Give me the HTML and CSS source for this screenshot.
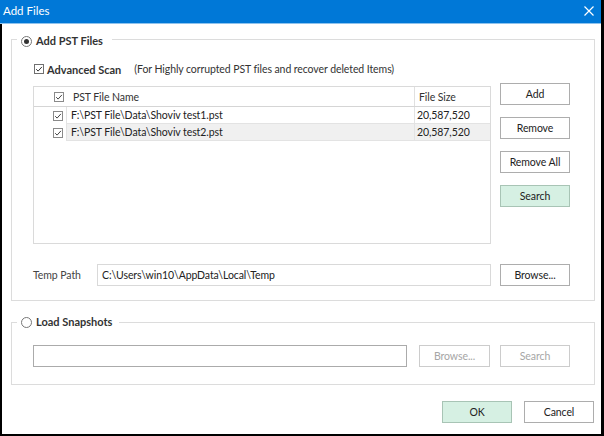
FILE: index.html
```html
<!DOCTYPE html>
<html>
<head>
<meta charset="utf-8">
<title>Add Files</title>
<link rel="stylesheet" href="styles.css">
</head>
<body>
<div class="window">
  <div class="titlebar">
    <span class="title">Add Files</span>
    <svg class="close" width="10" height="10" viewBox="0 0 10 10"><path d="M0.5 0.5L9.5 9.5M9.5 0.5L0.5 9.5" stroke="#fff" stroke-width="1.2" fill="none"/></svg>
  </div>
  <div class="body">
    <section class="group g1">
      <div class="legend">
        <span class="radio checked"></span><span class="legend-text">Add PST Files</span>
      </div>
      <div class="scan-row">
        <svg class="cb" width="10" height="10" viewBox="0 0 10 10"><rect x="0.5" y="0.5" width="9" height="9" fill="#fff" stroke="#707070"/><path d="M2.2 5.2L4.1 7.1L7.9 2.9" stroke="#333" stroke-width="1" fill="none"/></svg>
        <span class="scan-label">Advanced Scan</span>
        <span class="hint">(For Highly corrupted PST files and recover deleted Items)</span>
      </div>
      <div class="list-area">
        <div class="list">
          <div class="lhead">
            <div class="h-name">
              <svg class="cb" width="10" height="10" viewBox="0 0 10 10"><rect x="0.5" y="0.5" width="9" height="9" fill="#fff" stroke="#8a8a8a"/><path d="M2.2 5.2L4.1 7.1L7.9 2.9" stroke="#444" stroke-width="1" fill="none"/></svg>
              <span class="h-text">PST File Name</span>
            </div>
            <div class="h-size">File Size</div>
          </div>
          <div class="lrow">
            <div class="c-cb"><svg class="cb" width="10" height="10" viewBox="0 0 10 10"><rect x="0.5" y="0.5" width="9" height="9" fill="#fff" stroke="#8a8a8a"/><path d="M2.2 5.2L4.1 7.1L7.9 2.9" stroke="#444" stroke-width="1" fill="none"/></svg></div>
            <div class="c-name">F:\PST File\Data\Shoviv test1.pst</div>
            <div class="c-size">20,587,520</div>
          </div>
          <div class="lrow alt">
            <div class="c-cb"><svg class="cb" width="10" height="10" viewBox="0 0 10 10"><rect x="0.5" y="0.5" width="9" height="9" fill="#fff" stroke="#8a8a8a"/><path d="M2.2 5.2L4.1 7.1L7.9 2.9" stroke="#444" stroke-width="1" fill="none"/></svg></div>
            <div class="c-name">F:\PST File\Data\Shoviv test2.pst</div>
            <div class="c-size">20,587,520</div>
          </div>
        </div>
        <div class="btn-col">
          <button class="btn">Add</button>
          <button class="btn">Remove</button>
          <button class="btn">Remove All</button>
          <button class="btn green">Search</button>
        </div>
      </div>
      <div class="temp-row">
        <span class="temp-label">Temp Path</span>
        <div class="input temp-input">C:\Users\win10\AppData\Local\Temp</div>
        <button class="btn">Browse...</button>
      </div>
    </section>
    <section class="group g2">
      <div class="legend">
        <span class="radio"></span><span class="legend-text">Load Snapshots</span>
      </div>
      <div class="snap-row">
        <div class="input snap-input"></div>
        <button class="btn disabled snap-browse">Browse...</button>
        <button class="btn disabled">Search</button>
      </div>
    </section>
    <div class="footer">
      <button class="btn green">OK</button>
      <button class="btn">Cancel</button>
    </div>
  </div>
</div>
</body>
</html>
```

FILE: styles.css
```css
* { box-sizing: border-box; }
html, body { margin: 0; padding: 0; background: #fff; }
body {
  font-family: Lato, "Open Sans", sans-serif;
  font-size: 10.5px;
  letter-spacing: -0.08px;
  color: #222;
}
.window {
  width: 604px;
  height: 436px;
  border-right: 3px solid #000;
  display: flex;
  flex-direction: column;
  background: #fff;
}
.titlebar {
  height: 24px;
  flex: 0 0 24px;
  background: #0078d7;
  border-bottom: 1px solid #8ec3ee;
  display: flex;
  align-items: center;
  justify-content: space-between;
  padding: 0 7px 1px 3px;
  color: #fff;
}
.title { font-size: 11.5px; line-height: 14px; letter-spacing: 0; }
.close { display: block; }
.body {
  flex: 1;
  border-left: 2px solid #000;
  border-bottom: 2px solid #000;
  display: flex;
  flex-direction: column;
}
.group {
  border: 1px solid #dcdcdc;
  margin-left: 9px;
  width: 584px;
  display: flex;
  flex-direction: column;
  padding-left: 21px;
}
.g1 { margin-top: 15px; padding-bottom: 14px; }
.legend {
  align-self: flex-start;
  display: flex;
  align-items: center;
  height: 14px;
  background: #fff;
  margin-left: -16px;
  padding: 0 8px 0 4px;
  gap: 4px;
}
.g1 .legend { margin-top: -6px; padding-right: 9px; }
.legend-text { font-weight: 700; color: #333; font-size: 11px; line-height: 14px; letter-spacing: 0; }
.radio {
  width: 11px; height: 11px;
  border: 1px solid #777;
  border-radius: 50%;
  display: flex; align-items: center; justify-content: center;
  background: #fff;
}
.radio.checked::after {
  content: "";
  width: 5px; height: 5px;
  border-radius: 50%;
  background: #333;
}
.cb { display: block; flex: none; }
.scan-row {
  display: flex;
  align-items: center;
  height: 16px;
  margin-top: 13px;
  padding-left: 1px;
}
.scan-label { font-weight: 700; color: #333; margin-left: 3px; font-size: 11px; letter-spacing: 0; }
.hint { margin-left: 13px; color: #333; }
.list-area {
  display: flex;
  margin-top: 6px;
  gap: 9px;
}
.list {
  width: 458px;
  height: 158px;
  margin-top: 3px;
  border: 1px solid #dadada;
  display: flex;
  flex-direction: column;
}
.lhead {
  height: 20px;
  flex: none;
  display: flex;
  border-bottom: 1px solid #d5d5d5;
  color: #333;
}
.h-name {
  width: 381px;
  border-right: 1px solid #e0e0e0;
  display: flex;
  align-items: center;
  padding-left: 20px;
}
.h-text { margin-left: 9px; }
.h-size { flex: 1; display: flex; align-items: center; padding-left: 4px; }
.lrow {
  height: 17px;
  flex: none;
  display: flex;
}
.c-cb {
  width: 32px;
  display: flex;
  align-items: center;
  padding-left: 19px;
}
.c-name {
  width: 349px;
  border-left: 1px solid #e3e3e3;
  border-right: 1px solid #e3e3e3;
  border-bottom: 1px solid #e3e3e3;
  padding-left: 4px;
  display: flex;
  align-items: center;
}
.c-size {
  flex: 1;
  border-bottom: 1px solid #e3e3e3;
  padding-left: 2px;
  display: flex;
  align-items: center;
}
.lrow.alt .c-name, .lrow.alt .c-size { background: #f0f0f0; }
.btn-col {
  display: flex;
  flex-direction: column;
  gap: 12px;
}
.btn {
  width: 70px;
  height: 22px;
  border: 1px solid #adadad;
  background: #fff;
  font-family: inherit;
  font-size: 10.5px;
  letter-spacing: -0.08px;
  color: #222;
  padding: 0;
  margin: 0;
  display: flex;
  align-items: center;
  justify-content: center;
}
.btn.green { background: #d6f0e3; border-color: #a8c4b5; }
.btn.disabled { border-color: #cccccc; color: #a6a6a6; }
.temp-row {
  display: flex;
  align-items: center;
  margin-top: 20px;
}
.temp-label { width: 64px; color: #444; }
.input {
  height: 22px;
  border: 1px solid #d9d9d9;
  background: #fff;
  display: flex;
  align-items: center;
  padding-left: 4px;
}
.temp-input { width: 394px; margin-right: 9px; }
.g2 { margin-top: 21px; padding-bottom: 17px; }
.g2 .legend { margin-top: -8px; padding-right: 7px; }
.snap-row {
  display: flex;
  align-items: center;
  margin-top: 16px;
}
.snap-input { width: 374px; border-color: #ababab; margin-right: 12px; }
.snap-browse { width: 71px; margin-right: 10px; }
.footer {
  display: flex;
  justify-content: flex-end;
  gap: 12px;
  margin-top: 16px;
  margin-right: 7px;
}
```
